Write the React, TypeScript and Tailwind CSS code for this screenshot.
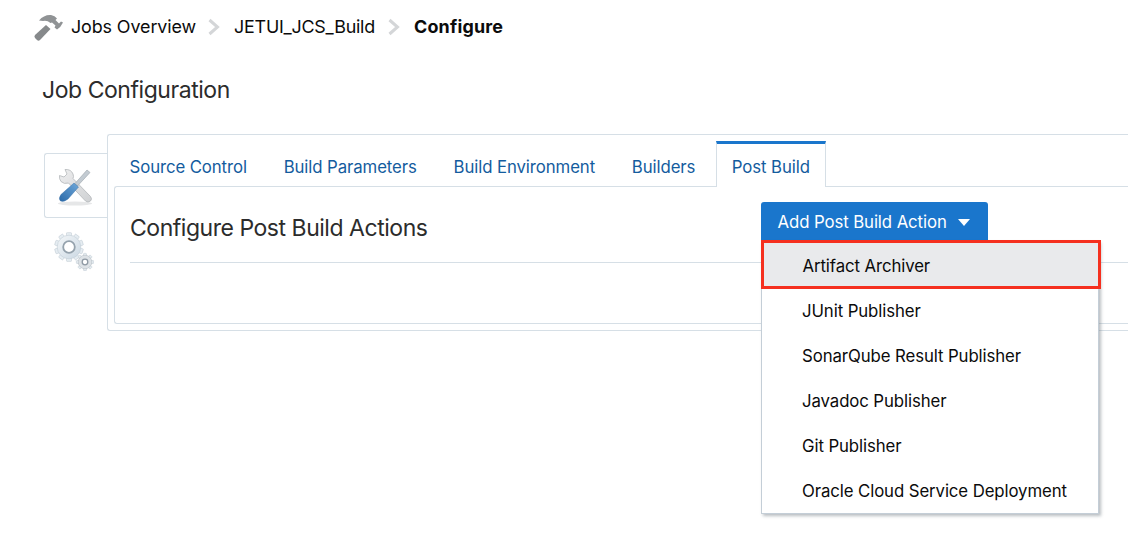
import React from "react";

const Hammer = () => (
  <svg width="30" height="30" viewBox="0 0 30 30" className="shrink-0">
    <path d="M13 13 L17.5 17 L7 28 Q5.5 29.5 4 28 L2 26 Q0.8 24.5 2 23 Z" fill="#86898b" />
    <path d="M6 8.5 Q11 2.5 18 3 Q22 3.5 24 6.5 L22.5 8 L26 11.5 L28 9.5 L30 10.5 Q28 15 24 17.5 L21.5 15.5 L22.5 13.5 L19 10.5 L17.5 11 Q14 8 10 9 Z" fill="#909395" />
  </svg>
);

const Tools = () => (
  <svg width="40" height="42" viewBox="0 0 40 42" className="blur-[0.3px]">
    <defs>
      <linearGradient id="wr" x1="0" y1="0" x2="1" y2="1">
        <stop offset="0" stopColor="#eeeeef" />
        <stop offset="1" stopColor="#cfd1d3" />
      </linearGradient>
      <linearGradient id="hd" x1="0" y1="1" x2="1" y2="0">
        <stop offset="0" stopColor="#2a69a8" />
        <stop offset="1" stopColor="#6fa8da" />
      </linearGradient>
    </defs>
    <ellipse cx="19" cy="37.5" rx="17" ry="2" fill="#e6e7e8" />
    <path d="M3.5 9.5 L8 11 L11 8 L9 3.5 Q15 3 17 8 Q18 10.5 17 12.5 L34.5 30.5 Q36.5 33 34.5 35 Q32 37 29.5 35 L12.5 17 Q8 18.5 5 15.5 Q3 13 3.5 9.5 Z" fill="url(#wr)" stroke="#b4b7ba" strokeWidth="0.8" strokeLinejoin="round" />
    <path d="M31 4 L34 6.5 L21.5 20 L19 17.5 Z" fill="#c3cbd2" stroke="#9aa2a9" strokeWidth="0.6" strokeLinejoin="round" />
    <path d="M18 17 L22.5 21 L12 33 Q8 36.5 4.5 35 Q2 32.5 5 28.5 Z" fill="url(#hd)" stroke="#2a65a0" strokeWidth="0.4" strokeLinejoin="round" />
  </svg>
);

const gearTeeth = (cx: number, cy: number, r: number, n: number) => {
  const out: React.ReactElement[] = [];
  for (let i = 0; i < n; i++) {
    out.push(
      <rect key={i} x={cx - r * 0.2} y={cy - r * 1.15} width={r * 0.4} height={r * 0.4} rx="0.6" fill="#e6edf2" stroke="#bcc7cf" strokeWidth="0.5" transform={`rotate(${(360 / n) * i} ${cx} ${cy})`} />
    );
  }
  return out;
};

const Gears = () => (
  <svg width="44" height="42" viewBox="0 0 44 42" className="blur-[0.3px]">
    <defs>
      <linearGradient id="gr" x1="0" y1="0" x2="1" y2="1">
        <stop offset="0" stopColor="#f4f7f9" />
        <stop offset="1" stopColor="#cbd8e3" />
      </linearGradient>
    </defs>
    {gearTeeth(15, 15, 12.5, 10)}
    <circle cx="15" cy="15" r="11.8" fill="url(#gr)" stroke="#c3ced6" strokeWidth="0.6" />
    <circle cx="15" cy="15" r="5.8" fill="#fff" stroke="#95a2ad" strokeWidth="1.8" />
    {gearTeeth(31, 30, 7.5, 8)}
    <circle cx="31" cy="30" r="6.8" fill="#dde2e6" stroke="#b9c0c6" strokeWidth="0.6" />
    <circle cx="31" cy="30" r="2.8" fill="#fff" stroke="#8f9aa4" strokeWidth="1.3" />
  </svg>
);

const Chevron = () => (
  <svg width="14" height="18" viewBox="0 0 14 18" className="shrink-0">
    <path d="M2.5 2 L10.5 9 L2.5 16" fill="none" stroke="#d4d6d8" strokeWidth="3" />
  </svg>
);

const tabs = ["Source Control", "Build Parameters", "Build Environment", "Builders"];
const items = ["JUnit Publisher", "SonarQube Result Publisher", "Javadoc Publisher", "Git Publisher", "Oracle Cloud Service Deployment"];

export default function App() {
  return (
    <div className="w-[1128px] h-[552px] overflow-hidden bg-white text-[#0b0b0b] font-['Inter','Liberation_Sans',sans-serif] text-[16.8px] tracking-[-0.1px]">
      <div className="flex items-center h-[30px] mt-[12px] pl-[33px] text-[17.9px]">
        <Hammer />
        <span className="ml-[8px]">Jobs Overview</span>
        <span className="ml-[11px]"><Chevron /></span>
        <span className="ml-[13px] tracking-[-0.22px]">JETUI_JCS_Build</span>
        <span className="ml-[12px]"><Chevron /></span>
        <span className="ml-[13px] font-bold tracking-[0.2px]">Configure</span>
      </div>
      <h1 className="mt-[33px] ml-[42px] text-[23px] leading-[30px] font-normal text-[#2c2c2c] tracking-[-0.45px]">Job Configuration</h1>
      <div className="flex mt-[29px]">
        <div className="w-[63px] ml-[44px] mt-[19px] shrink-0">
          <div className="h-[65px] border border-r-0 border-[#d6dfe6] rounded-l-[3px] pl-[11px] pt-[12px] bg-white">
            <Tools />
          </div>
          <div className="mt-[14px] ml-[10px]"><Gears /></div>
        </div>
        <div className="relative w-[1021px] h-[197px] border border-r-0 border-[#d6dfe6] rounded-l-[3px] pl-[6px] pt-[6px]">
          <div className="flex h-[46px] items-end pl-[8px] relative z-10 mb-[-1px]">
            {tabs.map((t, i) => (
              <div key={t} className={`h-[45px] flex items-center pt-[7px] pl-[7.5px] pr-[8px] text-[#145c9e] ${i === 3 ? "mr-[12.5px]" : "mr-[21.3px]"}`}>{t}</div>
            ))}
            <div className="h-[46px] w-[110px] border-x border-[#d6dfe6] border-t-[3px] border-t-[#1a76cc] bg-white flex items-center justify-center pt-[5px] text-[#145c9e]">Post Build</div>
          </div>
          <div className="h-[138px] border border-r-0 border-[#d6dfe6] rounded-l-[3px] pl-[15px]">
            <div className="h-[76px] border-b border-[#d6dfe6] flex items-center text-[23px] text-[#2c2c2c] tracking-[-0.47px] pt-[8px]">Configure Post Build Actions</div>
          </div>
          <div className="absolute left-[653px] top-[67px] w-[227px] h-[39px] bg-[#1a76cc] rounded-t-[3px] text-white flex items-center pl-[16.5px] pt-[2px] z-20">
            Add Post Build Action
            <svg width="12" height="7" viewBox="0 0 12 7" className="ml-[11px]"><path d="M0 0H12L6 7Z" fill="#fff" /></svg>
          </div>
          <div className="absolute left-[653px] top-[106px] w-[338px] h-[273px] bg-white border border-[#c4ced7] shadow-[2px_2px_3px_rgba(100,110,120,0.45)] z-20">
            <div className="h-[49px] w-[340px] ml-[-1px] mt-[-2px] border-[3px] border-[#f5301f] bg-[#e9eaec] flex items-center pl-[38.5px] pt-[4px]">Artifact Archiver</div>
            {items.map((t) => (
              <div key={t} className="h-[45px] flex items-center pl-[40px]">{t}</div>
            ))}
          </div>
        </div>
      </div>
    </div>
  );
}
